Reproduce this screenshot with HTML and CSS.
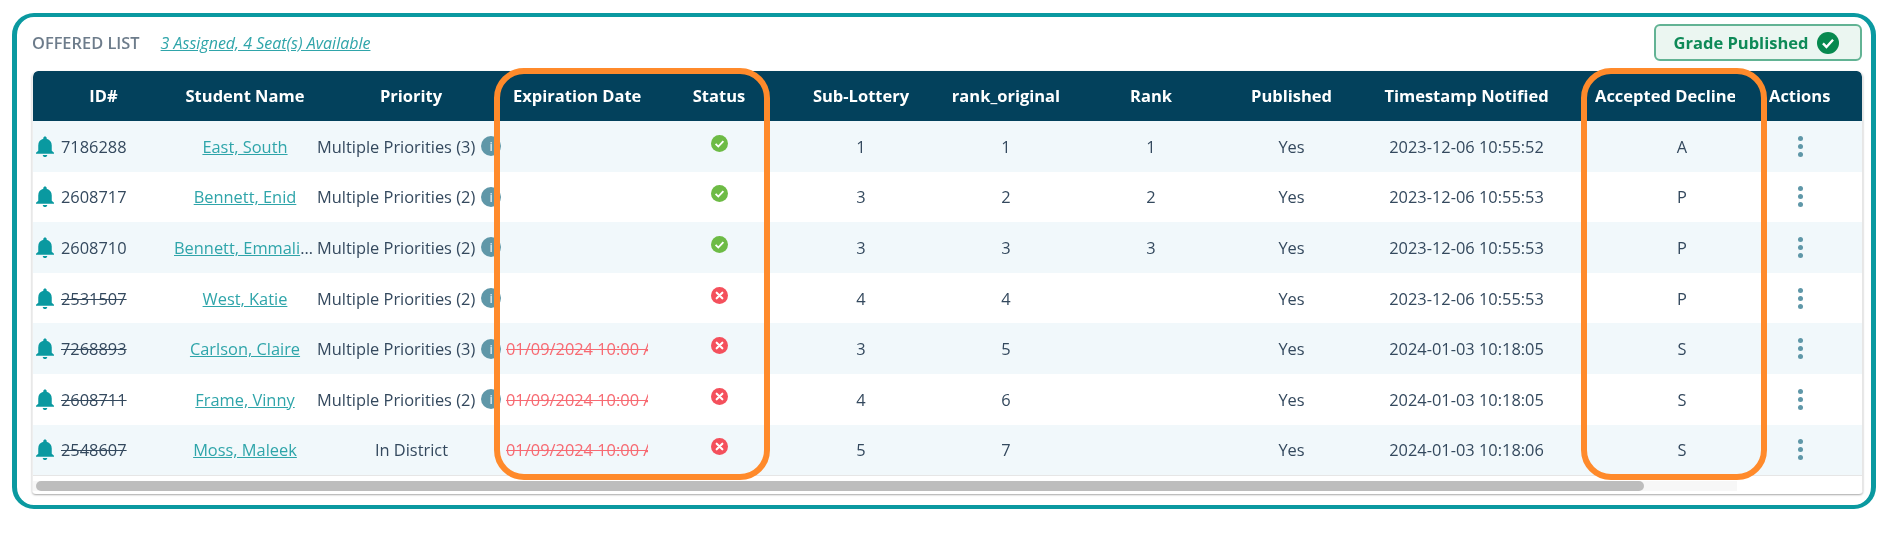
FILE: index.html
```html
<!DOCTYPE html>
<html lang="en">
<head>
<meta charset="utf-8">
<title>Offered List</title>
<link rel="stylesheet" href="styles.css">
</head>
<body>
<svg class="defs" aria-hidden="true">
  <symbol id="bell" viewBox="4 2 16 20" preserveAspectRatio="none"><path d="M12 22c1.1 0 2-.9 2-2h-4c0 1.1.9 2 2 2zm6-6v-5c0-3.07-1.63-5.64-4.5-6.32V4c0-.83-.67-1.5-1.5-1.5s-1.5.67-1.5 1.5v.68C7.64 5.36 6 7.92 6 11v5l-2 2v1h16v-1l-2-2z"/></symbol>
  <symbol id="ok" viewBox="0 0 24 24"><circle cx="12" cy="12" r="12"/><path d="M6.5 12.5l3.8 3.8 7.2-7.8" fill="none" stroke="#fff" stroke-width="2.6"/></symbol>
  <symbol id="no" viewBox="0 0 24 24"><circle cx="12" cy="12" r="12"/><path d="M8 8l8 8M16 8l-8 8" fill="none" stroke="#fff" stroke-width="3" stroke-linecap="round"/></symbol>
</svg>
<main class="frame">
  <header class="top">
    <div class="heading">
      <span class="title">OFFERED LIST</span>
      <a class="seats" href="#">3 Assigned, 4 Seat(s) Available</a>
    </div>
    <div class="published">Grade Published <svg class="published-icon"><use href="#ok"/></svg></div>
  </header>
  <section class="card">
    <div class="row head">
      <div>ID#</div><div>Student Name</div><div>Priority</div><div class="left">Expiration Date</div><div>Status</div><div>Sub-Lottery</div><div>rank_original</div><div>Rank</div><div>Published</div><div>Timestamp Notified</div><div class="accepted-head"><span>Accepted Declined</span></div><div class="left">Actions</div>
    </div>
    <div class="row">
      <div class="id"><svg class="bell"><use href="#bell"/></svg><span>7186288</span></div><div class="name"><a href="#">East, South</a></div><div class="priority"><span>Multiple Priorities (3)</span><i class="info">i</i></div><div class="date"></div><div class="status"><svg class="yes"><use href="#ok"/></svg></div><div>1</div><div>1</div><div>1</div><div>Yes</div><div>2023-12-06 10:55:52</div><div class="accepted">A</div><div class="actions"><b></b><b></b><b></b></div>
    </div>
    <div class="row">
      <div class="id"><svg class="bell"><use href="#bell"/></svg><span>2608717</span></div><div class="name"><a href="#">Bennett, Enid</a></div><div class="priority"><span>Multiple Priorities (2)</span><i class="info">i</i></div><div class="date"></div><div class="status"><svg class="yes"><use href="#ok"/></svg></div><div>3</div><div>2</div><div>2</div><div>Yes</div><div>2023-12-06 10:55:53</div><div class="accepted">P</div><div class="actions"><b></b><b></b><b></b></div>
    </div>
    <div class="row">
      <div class="id"><svg class="bell"><use href="#bell"/></svg><span>2608710</span></div><div class="name"><a href="#">Bennett, Emmaline</a></div><div class="priority"><span>Multiple Priorities (2)</span><i class="info">i</i></div><div class="date"></div><div class="status"><svg class="yes"><use href="#ok"/></svg></div><div>3</div><div>3</div><div>3</div><div>Yes</div><div>2023-12-06 10:55:53</div><div class="accepted">P</div><div class="actions"><b></b><b></b><b></b></div>
    </div>
    <div class="row">
      <div class="id"><svg class="bell"><use href="#bell"/></svg><s>2531507</s></div><div class="name"><a href="#">West, Katie</a></div><div class="priority"><span>Multiple Priorities (2)</span><i class="info">i</i></div><div class="date"></div><div class="status"><svg class="bad"><use href="#no"/></svg></div><div>4</div><div>4</div><div></div><div>Yes</div><div>2023-12-06 10:55:53</div><div class="accepted">P</div><div class="actions"><b></b><b></b><b></b></div>
    </div>
    <div class="row">
      <div class="id"><svg class="bell"><use href="#bell"/></svg><s>7268893</s></div><div class="name"><a href="#">Carlson, Claire</a></div><div class="priority"><span>Multiple Priorities (3)</span><i class="info">i</i></div><div class="date"><s>01/09/2024 10:00 AM</s></div><div class="status"><svg class="bad"><use href="#no"/></svg></div><div>3</div><div>5</div><div></div><div>Yes</div><div>2024-01-03 10:18:05</div><div class="accepted">S</div><div class="actions"><b></b><b></b><b></b></div>
    </div>
    <div class="row">
      <div class="id"><svg class="bell"><use href="#bell"/></svg><s>2608711</s></div><div class="name"><a href="#">Frame, Vinny</a></div><div class="priority"><span>Multiple Priorities (2)</span><i class="info">i</i></div><div class="date"><s>01/09/2024 10:00 AM</s></div><div class="status"><svg class="bad"><use href="#no"/></svg></div><div>4</div><div>6</div><div></div><div>Yes</div><div>2024-01-03 10:18:05</div><div class="accepted">S</div><div class="actions"><b></b><b></b><b></b></div>
    </div>
    <div class="row">
      <div class="id"><svg class="bell"><use href="#bell"/></svg><s>2548607</s></div><div class="name"><a href="#">Moss, Maleek</a></div><div class="priority single"><span>In District</span></div><div class="date"><s>01/09/2024 10:00 AM</s></div><div class="status"><svg class="bad"><use href="#no"/></svg></div><div>5</div><div>7</div><div></div><div>Yes</div><div>2024-01-03 10:18:06</div><div class="accepted">S</div><div class="actions"><b></b><b></b><b></b></div>
    </div>
    <div class="scroll"><div class="track"><div class="thumb"></div></div></div>
  </section>
  <div class="mark mark-a"></div>
  <div class="mark mark-b"></div>
</main>
</body>
</html>
```
FILE: styles.css
```css
* { box-sizing: border-box; }
html, body { margin: 0; background: #fff; }
body {
  font-family: "Open Sans", "Noto Sans", sans-serif;
  font-size: 16.4px;
  color: #34495e;
}
.defs { display: none; }

.frame {
  position: relative;
  width: 1864px;
  height: 496px;
  margin: 13px 0 0 12px;
  padding: 7px 8px 11px 15px;
  border: 4px solid #0a99a0;
  border-left-width: 5px;
  border-right-width: 5px;
  border-radius: 22px;
  filter: blur(0.35px);
}

.top {
  display: flex;
  align-items: center;
  justify-content: space-between;
  height: 37px;
  margin-bottom: 10px;
  padding-right: 1px;
}
.heading { display: flex; align-items: center; gap: 21px; }
.title { font-size: 16.4px; font-weight: 600; color: #6d7c8b; }
.seats { font-size: 16px; font-style: italic; color: #2fa5aa; }

.published {
  display: flex;
  align-items: center;
  justify-content: center;
  gap: 9px;
  width: 208px;
  height: 37px;
  padding-right: 3px;
  border: 2px solid #62b394;
  border-radius: 6px;
  background: #ebf6f1;
  color: #0e8a58;
  font-size: 16.5px;
  font-weight: 700;
}
.published-icon { width: 22px; height: 22px; fill: #07894f; }

.card {
  height: 423px;
  border-right: 1px solid #e6e6e6;
  border-left: 1px solid #eee;
  border-radius: 6px 6px 4px 4px;
  box-shadow: 0 1px 2px rgba(0, 0, 0, .35);
  overflow: hidden;
}

.row {
  display: grid;
  grid-template-columns: 141px 142px 190px 139px 148px 136px 154px 136px 145px 205px 200px 93px;
  align-items: center;
  height: 50.6px;
  text-align: center;
  white-space: nowrap;
}
.row:nth-child(even) { background: #f1f8fb; }
.row:nth-child(odd) { background: #fff; }

.row.head {
  height: 50px;
  padding-bottom: 2px;
  background: #03415c;
  color: #fff;
  font-weight: 700;
  font-size: 16.5px;
  border-radius: 5px 5px 0 0;
}
.left { text-align: left; }
.row.head .left:nth-child(4) { padding-left: 7px; }
.accepted-head { padding-left: 26px; text-align: left; }
.accepted-head span { display: block; width: 140px; overflow: hidden; }

.id { display: flex; align-items: center; gap: 7px; padding-left: 3px; }
.id s { text-decoration-thickness: 1px; }
.bell { width: 18px; height: 21px; fill: #0a99a0; }

.name { overflow: hidden; text-overflow: ellipsis; }
.name a { color: #2fa5aa; }

.priority { display: flex; align-items: center; gap: 6px; padding-left: 1px; overflow: visible; }
.priority.single { justify-content: center; }
.info {
  flex: none;
  width: 20px;
  height: 20px;
  border-radius: 50%;
  background: #5f97a8;
  color: #fff;
  font-size: 13px;
  font-style: normal;
  line-height: 20px;
}

.date { width: 142px; overflow: hidden; color: #f76a72; text-align: left; }
.date s { text-decoration-thickness: 1px; }

.status { display: flex; justify-content: center; padding-bottom: 6px; }
.yes, .bad { width: 17px; height: 17px; }
.yes { fill: #6dbb45; }
.bad { fill: #f4505c; }

.accepted { padding-left: 26px; }
.actions { display: flex; flex-direction: column; align-items: center; gap: 3px; width: 62px; }
.actions b { width: 5px; height: 5px; border-radius: 50%; background: #5f97a8; }

.scroll { height: 18px; padding-top: 5px; border-top: 1px solid #e6e6e6; background: #fff; }
.track { width: 1704px; height: 10px; padding-left: 3px; background: #f7f7f7; }
.thumb { width: 1608px; height: 10px; border-radius: 5px; background: #bdbdbd; }

.mark {
  position: absolute;
  top: 51px;
  height: 412px;
  border: 6px solid #ff8a2b;
  border-radius: 30px;
}
.mark-a { left: 477px; width: 276px; }
.mark-b { left: 1564px; width: 186px; }
```
